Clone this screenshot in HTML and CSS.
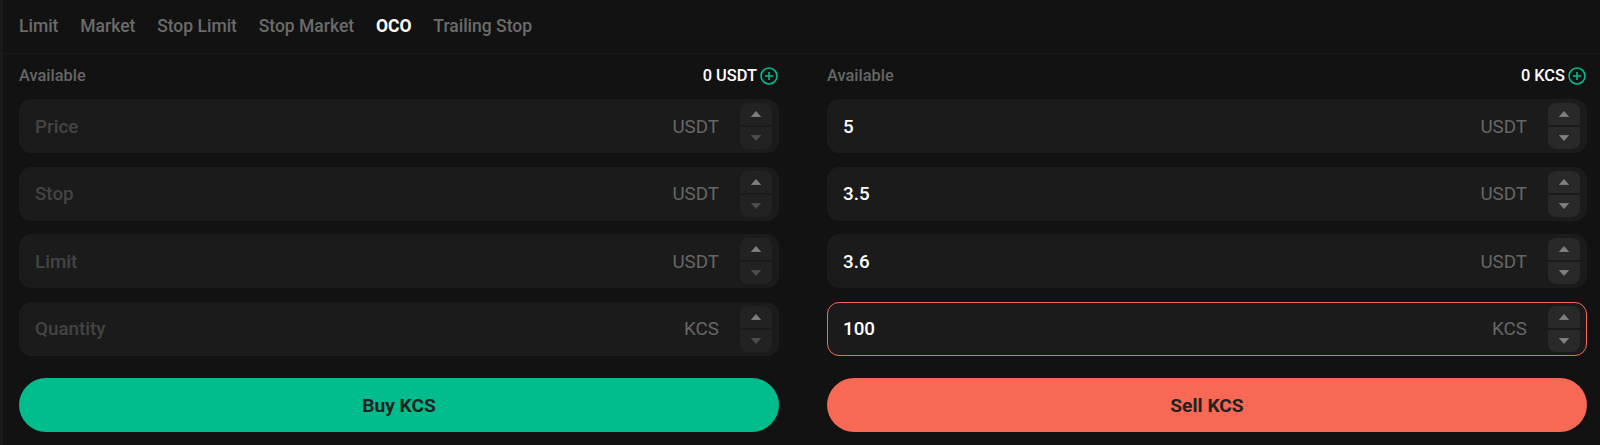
FILE: index.html
```html
<!DOCTYPE html>
<html lang="en">
<head>
<meta charset="utf-8">
<title>OCO order</title>
<link rel="stylesheet" href="styles.css">
</head>
<body>
<div class="panel">
  <nav class="tabs">
    <span class="tab">Limit</span>
    <span class="tab">Market</span>
    <span class="tab">Stop Limit</span>
    <span class="tab">Stop Market</span>
    <span class="tab active">OCO</span>
    <span class="tab">Trailing Stop</span>
  </nav>
  <div class="forms">
    <section class="form">
      <div class="avail"><span class="avail-label">Available</span><span class="avail-value">0 USDT<svg class="plus" viewBox="0 0 18 18"><circle cx="9" cy="9" r="8"/><path d="M9 5v8M5 9h8"/></svg></span></div>
      <div class="field"><span class="val ph">Price</span><span class="unit">USDT</span><div class="stepper"><button class="step"><svg class="caret" viewBox="0 0 10 6"><path d="M5 .5 9.5 5.5H.5z"/></svg></button><button class="step"><svg class="caret dn" viewBox="0 0 10 6"><path d="M.5 .5h9L5 5.5z"/></svg></button></div></div>
      <div class="field"><span class="val ph">Stop</span><span class="unit">USDT</span><div class="stepper"><button class="step"><svg class="caret" viewBox="0 0 10 6"><path d="M5 .5 9.5 5.5H.5z"/></svg></button><button class="step"><svg class="caret dn" viewBox="0 0 10 6"><path d="M.5 .5h9L5 5.5z"/></svg></button></div></div>
      <div class="field"><span class="val ph">Limit</span><span class="unit">USDT</span><div class="stepper"><button class="step"><svg class="caret" viewBox="0 0 10 6"><path d="M5 .5 9.5 5.5H.5z"/></svg></button><button class="step"><svg class="caret dn" viewBox="0 0 10 6"><path d="M.5 .5h9L5 5.5z"/></svg></button></div></div>
      <div class="field"><span class="val ph">Quantity</span><span class="unit">KCS</span><div class="stepper"><button class="step"><svg class="caret" viewBox="0 0 10 6"><path d="M5 .5 9.5 5.5H.5z"/></svg></button><button class="step"><svg class="caret dn" viewBox="0 0 10 6"><path d="M.5 .5h9L5 5.5z"/></svg></button></div></div>
      <button class="submit buy">Buy KCS</button>
    </section>
    <section class="form">
      <div class="avail"><span class="avail-label">Available</span><span class="avail-value">0 KCS<svg class="plus" viewBox="0 0 18 18"><circle cx="9" cy="9" r="8"/><path d="M9 5v8M5 9h8"/></svg></span></div>
      <div class="field"><span class="val">5</span><span class="unit">USDT</span><div class="stepper lit"><button class="step"><svg class="caret" viewBox="0 0 10 6"><path d="M5 .5 9.5 5.5H.5z"/></svg></button><button class="step"><svg class="caret" viewBox="0 0 10 6"><path d="M.5 .5h9L5 5.5z"/></svg></button></div></div>
      <div class="field"><span class="val">3.5</span><span class="unit">USDT</span><div class="stepper lit"><button class="step"><svg class="caret" viewBox="0 0 10 6"><path d="M5 .5 9.5 5.5H.5z"/></svg></button><button class="step"><svg class="caret" viewBox="0 0 10 6"><path d="M.5 .5h9L5 5.5z"/></svg></button></div></div>
      <div class="field"><span class="val">3.6</span><span class="unit">USDT</span><div class="stepper lit"><button class="step"><svg class="caret" viewBox="0 0 10 6"><path d="M5 .5 9.5 5.5H.5z"/></svg></button><button class="step"><svg class="caret" viewBox="0 0 10 6"><path d="M.5 .5h9L5 5.5z"/></svg></button></div></div>
      <div class="field focus"><span class="val">100</span><span class="unit">KCS</span><div class="stepper lit"><button class="step"><svg class="caret" viewBox="0 0 10 6"><path d="M5 .5 9.5 5.5H.5z"/></svg></button><button class="step"><svg class="caret" viewBox="0 0 10 6"><path d="M.5 .5h9L5 5.5z"/></svg></button></div></div>
      <button class="submit sell">Sell KCS</button>
    </section>
  </div>
</div>
</body>
</html>
```

FILE: styles.css
```css
* { box-sizing: border-box; }
html, body { margin: 0; height: 100%; background: #1a1a1a; }
body { font-family: Roboto, "Liberation Sans", sans-serif; overflow: hidden; }
.panel { margin-left: 3px; height: 445px; background: #121212; }
.tabs { display: flex; gap: 21.8px; height: 54px; padding: 0 16px 2px; align-items: center; border-bottom: 1px solid #1a1a1a; }
.tab { font-size: 17.5px; font-weight: 500; color: #6b6b6b; line-height: 24px; }
.tab.active { color: #fff; font-weight: 700; }
.forms { display: flex; gap: 48px; padding: 0 13px 0 16px; }
.form { flex: 1; min-width: 0; display: flex; flex-direction: column; }
.avail { display: flex; justify-content: space-between; align-items: center; height: 45px; padding-bottom: 2px; font-size: 16.4px; font-weight: 500; }
.avail-label { color: #666; }
.avail-value { display: flex; align-items: center; gap: 3px; margin-right: 1px; color: #fff; }
.plus { width: 18px; height: 18px; fill: none; stroke: #01bc8d; stroke-width: 1.6; }
.field { display: flex; align-items: center; height: 54px; margin-bottom: 13.5px; padding: 0 6px 0 15px; background: #1b1b1b; border: 1px solid #1b1b1b; border-radius: 12px; }
.field.focus { border-color: #f76955; }
.val { flex: 1; font-size: 18.8px; font-weight: 500; color: #fff; line-height: 26px; padding-top: 1px; }
.val.ph { color: #444; }
.unit { font-size: 18.8px; color: #666; margin-right: 21px; line-height: 26px; padding-top: 1px; }
.stepper { display: flex; flex-direction: column; gap: 2px; width: 32px; height: 46px; border-radius: 8px; overflow: hidden; }
.step { flex: 1; padding: 0; border: 0; background: #222; display: flex; align-items: center; justify-content: center; }
.stepper.lit .step { background: #292929; }
.caret { width: 10px; height: 6px; fill: #808080; stroke: #808080; stroke-width: 0.8; stroke-linejoin: round; }
.caret.dn { fill: #4d4d4d; stroke: #4d4d4d; }
.submit { height: 54px; margin-top: 9px; border: 0; border-radius: 27px; font: 700 19.2px Roboto, "Liberation Sans", sans-serif; color: #222; }
.buy { background: #01bc8d; }
.sell { background: #f76955; }
```
